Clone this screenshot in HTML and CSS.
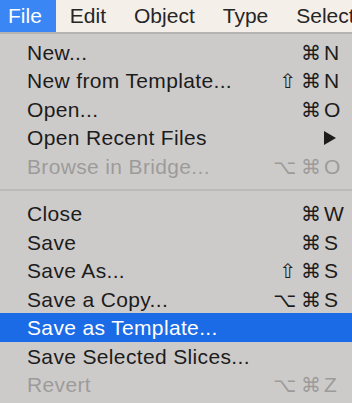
FILE: index.html
```html
<!DOCTYPE html>
<html>
<head>
<meta charset="utf-8">
<link rel="stylesheet" href="styles.css">
</head>
<body>
<div class="menubar">
  <div class="bar-item active">File</div>
  <div class="bar-item">Edit</div>
  <div class="bar-item">Object</div>
  <div class="bar-item">Type</div>
  <div class="bar-item">Select</div>
</div>
<div class="menu">
  <div class="row"><span class="label">New...</span><span class="mods"><span>⌘</span></span><span class="key">N</span></div>
  <div class="row"><span class="label">New from Template...</span><span class="mods"><span>⇧</span><span>⌘</span></span><span class="key">N</span></div>
  <div class="row"><span class="label">Open...</span><span class="mods"><span>⌘</span></span><span class="key">O</span></div>
  <div class="row"><span class="label">Open Recent Files</span><span class="mods"></span><span class="key"><span class="arrow"></span></span></div>
  <div class="row disabled"><span class="label">Browse in Bridge...</span><span class="mods"><span>⌥</span><span>⌘</span></span><span class="key">O</span></div>
  <div class="sep"></div>
  <div class="row"><span class="label">Close</span><span class="mods"><span>⌘</span></span><span class="key">W</span></div>
  <div class="row"><span class="label">Save</span><span class="mods"><span>⌘</span></span><span class="key">S</span></div>
  <div class="row"><span class="label">Save As...</span><span class="mods"><span>⇧</span><span>⌘</span></span><span class="key">S</span></div>
  <div class="row"><span class="label">Save a Copy...</span><span class="mods"><span>⌥</span><span>⌘</span></span><span class="key">S</span></div>
  <div class="row selected"><span class="label">Save as Template...</span><span class="mods"></span><span class="key"></span></div>
  <div class="row"><span class="label">Save Selected Slices...</span><span class="mods"></span><span class="key"></span></div>
  <div class="row disabled"><span class="label">Revert</span><span class="mods"><span>⌥</span><span>⌘</span></span><span class="key">Z</span></div>
</div>
</body>
</html>
```

FILE: styles.css
```css
html, body {
  margin: 0;
  padding: 0;
}
body {
  width: 352px;
  height: 403px;
  overflow: hidden;
  background: #cdcbca;
  font-family: "Liberation Sans", "DejaVu Sans", sans-serif;
  font-size: 21px;
  color: #1c1c1c;
}
.menubar {
  display: flex;
  height: 32px;
  background: #f5efea;
  border-bottom: 2px solid #b6b4b3;
  white-space: nowrap;
  overflow: hidden;
}
.bar-item {
  line-height: 32px;
  padding: 0 14px;
  color: #262626;
}
.bar-item.active {
  padding: 0 14px 0 8px;
  background: #3a86f4;
  color: #ffffff;
}
.menu {
  padding-top: 3.75px;
}
.row {
  display: grid;
  grid-template-columns: 1fr auto 28px;
  height: 28.5px;
  line-height: 28.5px;
  padding-left: 27px;
  white-space: nowrap;
}
.row > span {
  display: block;
  padding-top: 1px;
}
.label {
  letter-spacing: 0.35px;
}
.row > .mods {
  display: flex;
  justify-content: flex-end;
  gap: 5px;
  padding-right: 3px;
  font-family: "DejaVu Sans", sans-serif;
  font-size: 20px;
}
.key {
  text-align: left;
  position: relative;
}
.disabled {
  color: #9d9b9a;
}
.selected {
  background: #1b6ae6;
  color: #ffffff;
}
.sep {
  height: 19px;
  display: flex;
  align-items: center;
}
.sep::before {
  content: "";
  display: block;
  width: 100%;
  height: 2px;
  background: #bcbab9;
}
.arrow {
  position: absolute;
  left: 0;
  top: 8px;
  width: 0;
  height: 0;
  border-top: 7px solid transparent;
  border-bottom: 7px solid transparent;
  border-left: 12px solid #1c1c1c;
}
```
